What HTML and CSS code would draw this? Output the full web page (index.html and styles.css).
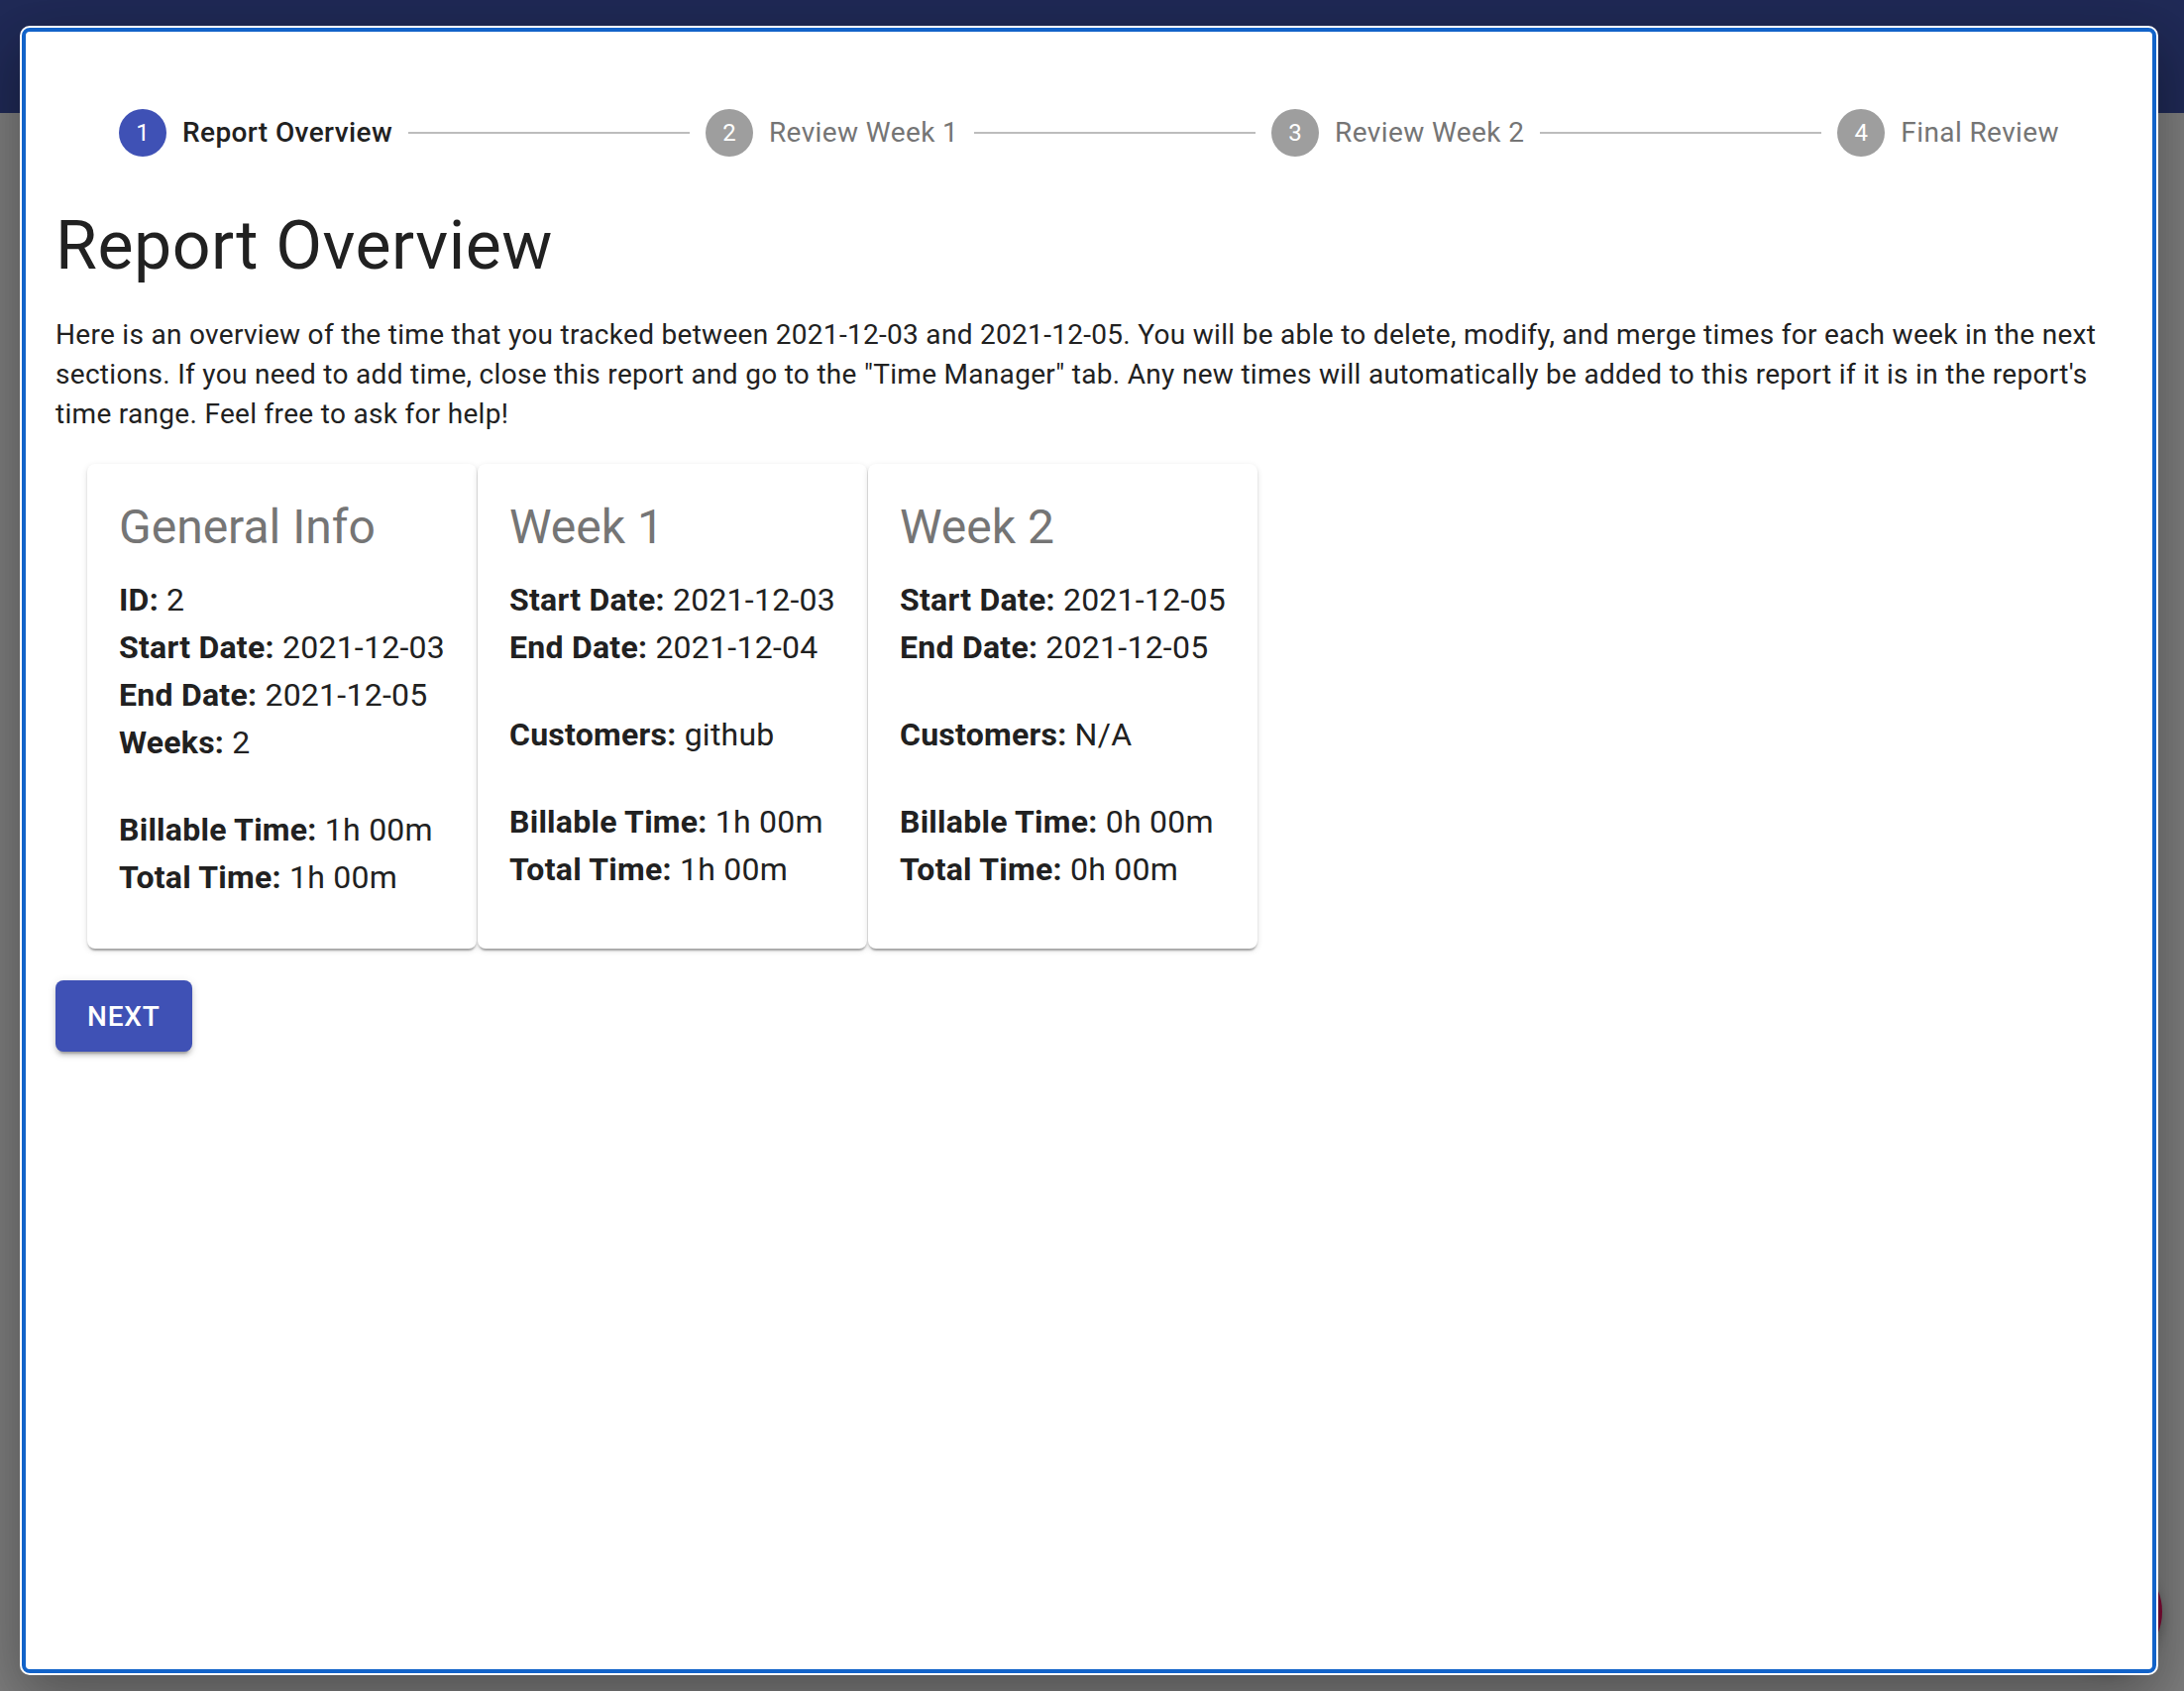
FILE: index.html
```html
<!DOCTYPE html>
<html lang="en">
<head>
<meta charset="utf-8">
<title>Report Overview</title>
<link rel="stylesheet" href="styles.css">
</head>
<body>
<header class="appbar"></header>
<main class="backdrop"></main>
<div class="fab"></div>

<div class="dialog">
  <div class="dialog-inner">
    <nav class="stepper">
      <div class="step active">
        <span class="step-icon">1</span>
        <span class="step-label">Report Overview</span>
      </div>
      <div class="connector"></div>
      <div class="step">
        <span class="step-icon">2</span>
        <span class="step-label">Review Week 1</span>
      </div>
      <div class="connector"></div>
      <div class="step">
        <span class="step-icon">3</span>
        <span class="step-label">Review Week 2</span>
      </div>
      <div class="connector"></div>
      <div class="step">
        <span class="step-icon">4</span>
        <span class="step-label">Final Review</span>
      </div>
    </nav>

    <h1 class="title">Report Overview</h1>
    <p class="intro">Here is an overview of the time that you tracked between 2021-12-03 and 2021-12-05. You will be able to delete, modify, and merge times for each week in the next sections. If you need to add time, close this report and go to the "Time Manager" tab. Any new times will automatically be added to this report if it is in the report's time range. Feel free to ask for help!</p>

    <div class="cards">
      <section class="card">
        <h2 class="card-title">General Info</h2>
        <div class="row"><b>ID:</b> 2</div>
        <div class="row"><b>Start Date:</b> 2021-12-03</div>
        <div class="row"><b>End Date:</b> 2021-12-05</div>
        <div class="row"><b>Weeks:</b> 2</div>
        <div class="spacer"></div>
        <div class="row"><b>Billable Time:</b> 1h 00m</div>
        <div class="row"><b>Total Time:</b> 1h 00m</div>
      </section>
      <section class="card">
        <h2 class="card-title">Week 1</h2>
        <div class="row"><b>Start Date:</b> 2021-12-03</div>
        <div class="row"><b>End Date:</b> 2021-12-04</div>
        <div class="spacer"></div>
        <div class="row"><b>Customers:</b> github</div>
        <div class="spacer"></div>
        <div class="row"><b>Billable Time:</b> 1h 00m</div>
        <div class="row"><b>Total Time:</b> 1h 00m</div>
      </section>
      <section class="card">
        <h2 class="card-title">Week 2</h2>
        <div class="row"><b>Start Date:</b> 2021-12-05</div>
        <div class="row"><b>End Date:</b> 2021-12-05</div>
        <div class="spacer"></div>
        <div class="row"><b>Customers:</b> N/A</div>
        <div class="spacer"></div>
        <div class="row"><b>Billable Time:</b> 0h 00m</div>
        <div class="row"><b>Total Time:</b> 0h 00m</div>
      </section>
    </div>

    <button class="btn-next">Next</button>
  </div>
</div>
</body>
</html>
```
FILE: styles.css
```css
* { box-sizing: border-box; }

html, body {
  margin: 0;
  height: 100%;
}

body {
  background: #7f7f7f;
  font-family: Roboto, "Liberation Sans", Arial, sans-serif;
  color: #212121;
  overflow: hidden;
}

.appbar {
  height: 114px;
  background: #202a57;
}

.backdrop {
  height: calc(100% - 114px);
  background: #7f7f7f;
}

.fab {
  position: absolute;
  left: 2070px;
  top: 1570px;
  width: 112px;
  height: 112px;
  border-radius: 50%;
  background: #820a35;
  box-shadow: 0 6px 12px rgba(0,0,0,0.25);
}

.dialog {
  position: absolute;
  left: 20px;
  top: 26px;
  width: 2158px;
  height: 1664px;
  padding: 2px;
  background: #fff;
  border-radius: 10px;
  box-shadow: 0 22px 70px 8px rgba(0,0,0,0.22), 0 18px 48px rgba(0,0,0,0.16);
}

.dialog-inner {
  height: 100%;
  border: 4px solid #1263c9;
  border-radius: 8px;
  padding: 30px;
}

/* Stepper */
.stepper {
  display: flex;
  align-items: center;
  padding: 48px;
}

.step {
  display: flex;
  align-items: center;
  padding: 0 16px;
}

.step-icon {
  width: 48px;
  height: 48px;
  border-radius: 50%;
  background: #9e9e9e;
  color: #fff;
  font-size: 24px;
  line-height: 48px;
  text-align: center;
  flex: none;
}

.step-label {
  padding-left: 16px;
  font-size: 28px;
  line-height: 40px;
  letter-spacing: 0.4px;
  color: #757575;
  white-space: nowrap;
}

.step.active .step-icon { background: #3f51b5; }
.step.active .step-label { color: #212121; font-weight: 500; }

.connector {
  flex: 1;
  border-top: 2px solid #bdbdbd;
}

/* Heading & intro */
.title {
  margin: 0;
  font-size: 68px;
  font-weight: 400;
  line-height: 84px;
  letter-spacing: 0.5px;
}

.intro {
  margin: 28px 0;
  font-size: 28px;
  line-height: 40px;
  letter-spacing: 0.3px;
}

/* Cards */
.cards {
  display: flex;
  align-items: stretch;
  gap: 1px;
  margin: 30px 0 0 32px;
}

.card {
  background: #fff;
  border-radius: 8px;
  padding: 32px 32px 48px;
  box-shadow: 0 4px 2px -2px rgba(0,0,0,0.2), 0 2px 2px 0 rgba(0,0,0,0.14), 0 2px 6px 0 rgba(0,0,0,0.12);
}

.card-title {
  margin: 0 0 17px;
  font-size: 48px;
  font-weight: 400;
  line-height: 64px;
  color: #757575;
}

.row {
  font-size: 32px;
  line-height: 48px;
  letter-spacing: 0.25px;
  white-space: nowrap;
}

.row b { font-weight: 700; }

.spacer { height: 40px; }

/* Button */
.btn-next {
  display: block;
  margin-top: 32px;
  height: 72px;
  padding: 0 32px;
  border: 0;
  border-radius: 8px;
  background: #3f51b5;
  color: #fff;
  font-family: Roboto, "Liberation Sans", Arial, sans-serif;
  font-size: 28px;
  font-weight: 500;
  letter-spacing: 0.8px;
  text-transform: uppercase;
  box-shadow: 0 6px 2px -4px rgba(0,0,0,0.2), 0 4px 4px 0 rgba(0,0,0,0.14), 0 2px 10px 0 rgba(0,0,0,0.12);
}
```
